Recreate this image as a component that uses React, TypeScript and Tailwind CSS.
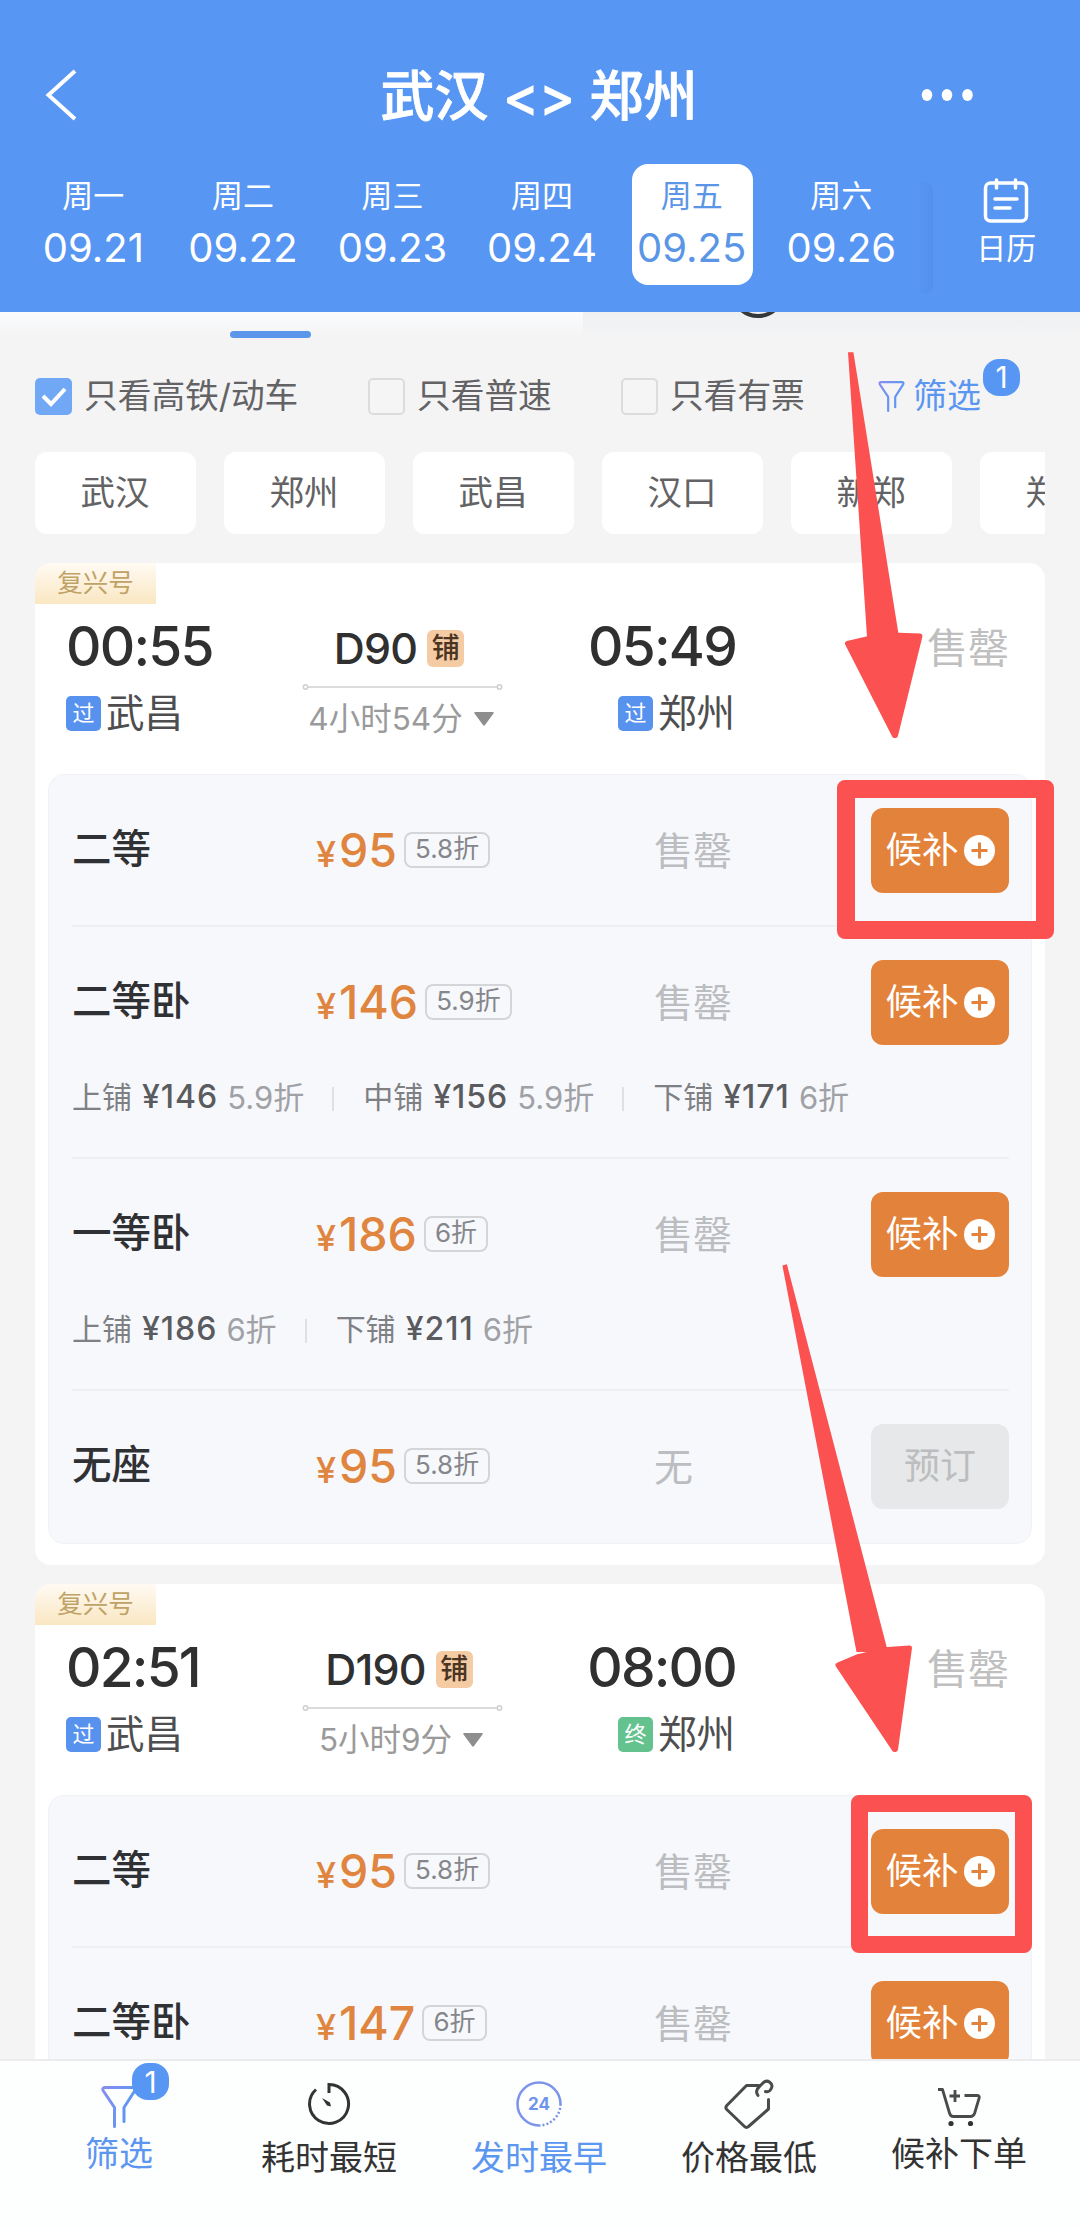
import { Fragment } from "react";
import clsx from "clsx";

type Berth = { name: string; price: number; discount: string };

type Seat = {
  name: string;
  price: number;
  discount: string;
  status: string;
  bookable: boolean;
  berths?: Berth[];
};

type Train = {
  code: string;
  depart: string;
  arrive: string;
  duration: string;
  arriveKind: "过" | "终";
  seats: Seat[];
};

const days = [
  { week: "周一", date: "09.21" },
  { week: "周二", date: "09.22" },
  { week: "周三", date: "09.23" },
  { week: "周四", date: "09.24" },
  { week: "周五", date: "09.25", active: true },
  { week: "周六", date: "09.26" },
];

const stations = ["武汉", "郑州", "武昌", "汉口", "新郑", "郑州"];

const trains: Train[] = [
  {
    code: "D90",
    depart: "00:55",
    arrive: "05:49",
    duration: "4小时54分",
    arriveKind: "过",
    seats: [
      { name: "二等", price: 95, discount: "5.8折", status: "售罄", bookable: true },
      {
        name: "二等卧",
        price: 146,
        discount: "5.9折",
        status: "售罄",
        bookable: true,
        berths: [
          { name: "上铺", price: 146, discount: "5.9折" },
          { name: "中铺", price: 156, discount: "5.9折" },
          { name: "下铺", price: 171, discount: "6折" },
        ],
      },
      {
        name: "一等卧",
        price: 186,
        discount: "6折",
        status: "售罄",
        bookable: true,
        berths: [
          { name: "上铺", price: 186, discount: "6折" },
          { name: "下铺", price: 211, discount: "6折" },
        ],
      },
      { name: "无座", price: 95, discount: "5.8折", status: "无", bookable: false },
    ],
  },
  {
    code: "D190",
    depart: "02:51",
    arrive: "08:00",
    duration: "5小时9分",
    arriveKind: "终",
    seats: [
      { name: "二等", price: 95, discount: "5.8折", status: "售罄", bookable: true },
      { name: "二等卧", price: 147, discount: "6折", status: "售罄", bookable: true },
    ],
  },
];

function Funnel({ className }: { className?: string }) {
  return (
    <svg className={className} viewBox="0 0 36 42" fill="none" stroke="url(#funnel)" strokeWidth="3" strokeLinecap="round" strokeLinejoin="round">
      <defs>
        <linearGradient id="funnel" gradientUnits="userSpaceOnUse" x1="0" y1="0" x2="36" y2="12">
          <stop offset="0" stopColor="#8a8df0" />
          <stop offset="1" stopColor="#5b98f2" />
        </linearGradient>
      </defs>
      <path d="M13.5 40.5V21.5L2.4 5C1.2 3 1.8 1.5 4 1.5h28c2.200 0 2.800 1.500 1.600 3.500L23 21.500v14" />
    </svg>
  );
}

function Header() {
  return (
    <header className="flex h-[312px] shrink-0 flex-col bg-[#5796f3] text-white">
      <div className="flex h-[164px] items-center pt-[25px] pl-[45px]">
        <svg className="h-[52px] w-8" viewBox="0 0 32 52" fill="none" stroke="currentColor" strokeWidth="4">
          <path d="M30 2 3.500 26 30 50" />
        </svg>
        <h1 className="w-[924px] pt-[4px] text-center text-[54px] leading-none font-medium [-webkit-text-stroke:0.8px_white]">
          武汉 &lt;&gt; 郑州
        </h1>
        <svg className="-ml-[81px] h-3 w-[54px]" viewBox="0 0 54 12" fill="currentColor">
          <ellipse cx="7" cy="6" rx="5.300" ry="6" />
          <ellipse cx="27" cy="6" rx="5.300" ry="6" />
          <ellipse cx="47.500" cy="6" rx="5.300" ry="6" />
        </svg>
      </div>
      <div className="flex h-[121px] items-stretch pl-[19px]">
        {days.map((day) => (
          <div key={day.date} className="flex w-[149.600px] justify-center">
            <div
              className={clsx(
                "flex w-[121px] flex-col items-center rounded-2xl pt-[17px]",
                day.active && "bg-white text-[#5b96e6]"
              )}
            >
              <span className="pr-[1px] text-[31px] leading-[30px]">{day.week}</span>
              <span className="mt-[17px] pr-[1px] text-[40px] leading-[40px]">{day.date}</span>
            </div>
          </div>
        ))}
        <div className="mt-[18px] h-[112px] w-[16px] rounded-full bg-linear-to-r from-[#5796f3] to-[#5290ec]" />
        <div className="flex flex-1 flex-col items-center pt-[14px]">
          <svg className="h-[46px] w-[46px]" viewBox="0 0 46 46" fill="none" stroke="currentColor" strokeWidth="3.500" strokeLinecap="round">
            <rect x="2.500" y="5" width="41" height="38" rx="5" />
            <path d="M13.500 2v8M32.500 2v8M12 21h22M12 30h15" />
          </svg>
          <span className="mt-[9px] text-[30px] leading-[30px]">日历</span>
        </div>
      </div>
    </header>
  );
}

function CheckItem({ label, checked }: { label: string; checked?: boolean }) {
  return (
    <label className="flex items-center gap-[12px]">
      <span
        className={clsx(
          "flex h-[37px] w-[37px] items-center justify-center rounded-[5px]",
          checked ? "bg-[#71a8f6]" : "border-2 border-[#dcdcde] bg-[#f5f5f6]"
        )}
      >
        {checked && (
          <svg className="h-[20px] w-[26px]" viewBox="0 0 26 20" fill="none" stroke="#fff" strokeWidth="4">
            <path d="M2 9l8 8L24 2" />
          </svg>
        )}
      </span>
      <span className="pb-[2px] text-[33.700px] leading-none">{label}</span>
    </label>
  );
}

function Filters() {
  return (
    <div className="shrink-0 text-[#636366]">
      <div className="relative flex h-[66px] overflow-hidden">
        <div className="h-[26px] w-[583px] bg-linear-to-b from-[#fafbfc] to-[#f4f4f5]" />
        <div className="h-[26px] flex-1 bg-linear-to-b from-[#eef0f1] to-[#f4f4f5]" />
        <span className="absolute top-[19px] left-[230px] h-[7px] w-[81px] rounded-full bg-[#5c96ea]" />
        <span className="absolute -top-[50px] left-[730px] h-[56px] w-[56px] rounded-full border-4 border-[#33393b]" />
      </div>
      <div className="flex h-[37px] items-center pl-[35px]">
        <div className="w-[333px]">
          <CheckItem label="只看高铁/动车" checked />
        </div>
        <div className="w-[253px]">
          <CheckItem label="只看普速" />
        </div>
        <div className="w-[257px]">
          <CheckItem label="只看有票" />
        </div>
        <div className="relative flex items-center text-[#5b96f0]">
          <Funnel className="h-[31px] w-[27px]" />
          <span className="ml-[8px] pb-[2px] text-[34px] leading-none">筛选</span>
          <Badge className="-top-[20px] left-[105px]" />
        </div>
      </div>
      <div className="mt-[37px] mr-[35px] ml-[35px] flex h-[82px] gap-[28px] overflow-hidden">
        {stations.map((name, i) => (
          <div key={i} className="flex w-[161px] shrink-0 items-center justify-center rounded-xl bg-white pr-[1px] text-[34.500px] leading-none">
            {name}
          </div>
        ))}
      </div>
    </div>
  );
}

function Badge({ className }: { className: string }) {
  return (
    <span className={clsx("absolute flex h-[37px] w-[37px] items-center justify-center rounded-2xl bg-[#5796f3] text-[30px] leading-none text-white", className)}>
      1
    </span>
  );
}

function Stop({ kind, name }: { kind: string; name: string }) {
  return (
    <div className="flex items-center gap-[5px]">
      <span
        className={clsx(
          "flex h-[35px] w-[35px] items-center justify-center rounded-[5px] text-[22px] leading-none text-white",
          kind === "终" ? "bg-[#63c28d]" : "bg-[#5792ee]"
        )}
      >
        {kind}
      </span>
      <span className="pr-[1px] text-[38.500px] leading-none text-[#4e4e50]">{name}</span>
    </div>
  );
}

function SeatRow({ seat }: { seat: Seat }) {
  return (
    <div className={clsx("border-b-2 border-[#eeeff2] last:border-b-0", seat.berths ? "h-[232px]" : "h-[152px]")}>
      <div className="flex h-[150px] items-center">
        <span className="w-[244px] text-[39.500px] leading-none font-medium text-[#303134]">{seat.name}</span>
        <div className="flex w-[338px] items-center">
          <div className="flex items-baseline gap-[3px] leading-none font-medium text-[#df853f]">
            <span className="text-[36px] leading-none">¥</span>
            <span className="text-[46.500px] leading-none">{seat.price}</span>
          </div>
          <span className="ml-[7px] flex h-[36px] items-center rounded-lg border-2 border-[#d4d5d8] px-[9px] pb-[3px] text-[26px] leading-none text-[#85868a]">
            {seat.discount}
          </span>
        </div>
        <span className="text-[39px] leading-none text-[#bcbdc0]">{seat.status}</span>
        {seat.bookable ? (
          <button className="ml-auto flex h-[85px] w-[138px] items-center justify-center gap-[5px] rounded-xl bg-[#e3823a] text-[36.500px] leading-none text-white">
            候补
            <svg className="h-[31px] w-[31px]" viewBox="0 0 31 31">
              <circle cx="15.500" cy="15.500" r="15.500" fill="#fff" />
              <path d="M7.500 15.500h16M15.500 7.500v16" stroke="#e3823a" strokeWidth="3" />
            </svg>
          </button>
        ) : (
          <button className="ml-auto h-[85px] w-[138px] rounded-xl bg-[#e6e8e9] text-[36px] leading-none text-[#bcbdbe]">
            预订
          </button>
        )}
      </div>
      {seat.berths && (
        <div className="flex h-[40px] items-center text-[30px] leading-none">
          {seat.berths.map((b, i) => (
            <Fragment key={b.name}>
              {i > 0 && <span className="mt-1 mr-[29px] ml-[28px] h-6 w-[2px] bg-[#dfe0e3]" />}
              <span className="text-[#7f8084]">{b.name}</span>
              <span className="ml-[10px] text-[32px] font-medium tracking-[1px] text-[#5a5b5e]">¥{b.price}</span>
              <span className="ml-[9px] text-[31px] text-[#a0a1a5]">{b.discount}</span>
            </Fragment>
          ))}
        </div>
      )}
    </div>
  );
}

function TrainCard({ train }: { train: Train }) {
  return (
    <section className="shrink-0 rounded-2xl bg-white px-[13px] pb-[21px]">
      <div className="-ml-[13px] h-[41px] w-[121px] rounded-tl-2xl bg-linear-to-b from-[#fffaf3] to-[#fae7c2] pt-[7px] text-center text-[25.500px] leading-[26px] text-[#bfa266]">
        复兴号
      </div>
      <div className="flex h-[170px] pt-[15px] pl-[18px] text-[#303030]">
        <div className="w-[236px]">
          <div className="text-[55px] leading-[55px] font-medium tracking-[-1.800px]">{train.depart}</div>
          <div className="mt-[20px]">
            <Stop kind="过" name="武昌" />
          </div>
        </div>
        <div className="flex w-[201px] flex-col items-center">
          <div className="mt-[5px] flex h-[48px] items-center gap-[10px] pr-[7px]">
            <span className="text-[43px] leading-none font-medium tracking-[-0.800px]">{train.code}</span>
            <span className="flex h-[37px] w-[37px] items-center justify-center rounded-md bg-[#f5cba4] text-[28px] leading-none font-medium text-[#4a3523]">
              铺
            </span>
          </div>
          <svg className="mt-[11px] h-[8px] w-[201px]" viewBox="0 0 201 8" fill="none" stroke="#cfcfcf" strokeWidth="1.500">
            <circle cx="3.500" cy="4" r="2.200" />
            <circle cx="197.500" cy="4" r="2.200" />
            <path d="M6 4h189" />
          </svg>
          <div className="mt-[12px] flex items-center gap-[11px] pr-[3px] text-[31.500px] leading-none text-[#9a9a9a]">
            {train.duration}
            <svg className="h-[14px] w-[20px]" viewBox="0 0 20 14" fill="#8e8e8e">
              <path d="M1.500 0h17q2 0 1 1.500L11 13q-1 1.300-2 0L.5 1.500Q-.5 0 1.500 0z" />
            </svg>
          </div>
        </div>
        <div className="flex w-[233px] flex-col items-end">
          <div className="text-[55px] leading-[55px] font-medium tracking-[-1.800px]">{train.arrive}</div>
          <div className="mt-[20px]">
            <Stop kind={train.arriveKind} name="郑州" />
          </div>
        </div>
        <span className="mt-[9px] ml-auto pr-[23px] text-[41px] leading-none text-[#bfbfbf]">售罄</span>
      </div>
      <div className="rounded-2xl border border-[#f1f2f5] bg-[#f7f8fc] pr-[22px] pl-[23px]">
        {train.seats.map((seat) => (
          <SeatRow key={seat.name} seat={seat} />
        ))}
      </div>
    </section>
  );
}

function TabBar() {
  return (
    <nav className="flex h-[169px] shrink-0 border-t-2 border-[#ececee] bg-[#fdfefe] px-[14px] text-[34px] leading-none text-[#333]">
      <div className="relative flex w-[210px] flex-col items-center pt-[25px] text-[#5b96f0]">
        <Funnel className="h-[42px] w-[36px]" />
        <Badge className="top-[2px] left-[118px]" />
        <span className="mt-[9px]">筛选</span>
      </div>
      <div className="flex w-[210px] flex-col items-center pt-[21px]">
        <svg className="h-[44px] w-[44px]" viewBox="0 0 44 44" fill="none" stroke="currentColor" strokeWidth="3">
          <path d="M22 11V2.500a19.500 19.500 0 1 1-13 5" />
          <path d="M15 16l8 4.500 1 4-4-1z" fill="currentColor" stroke="none" />
        </svg>
        <span className="mt-[15px]">耗时最短</span>
      </div>
      <div className="flex w-[210px] flex-col items-center pt-[20px] text-[#5b96f0]">
        <svg className="h-[46px] w-[46px]" viewBox="0 0 46 46" fill="none" stroke="#7c94ea" strokeWidth="2.500">
          <path d="M23 44.500A21.500 21.500 0 1 1 44.500 23" />
          <path d="M44.500 23A21.500 21.500 0 0 1 23 44.500" strokeDasharray="2 2" />
          <text x="23" y="29" textAnchor="middle" fontSize="17" fontWeight="700" fill="#6f92ec" stroke="none">
            24
          </text>
        </svg>
        <span className="mt-[14px]">发时最早</span>
      </div>
      <div className="flex w-[210px] flex-col items-center pt-[18px]">
        <svg className="h-[50px] w-[50px]" viewBox="0 0 50 50" fill="none" stroke="#4a4a4a" strokeWidth="3" strokeLinecap="round" strokeLinejoin="round">
          <path d="M35 6.500H22.500L2.800 26.500q-1.800 2 0 4L20.500 47.500q2 2 4 0L44.500 30V20.500" />
          <path d="M34 16.500c-2.500-3.500-1.500-6.500 1.500-9l4-4c4-3.500 10 1 8 5.500-1 2.500-3.500 4.500-6 3.500" />
        </svg>
        <span className="mt-[12px]">价格最低</span>
      </div>
      <div className="flex w-[210px] flex-col items-center pt-[26px]">
        <svg className="h-[40px] w-[44px]" viewBox="0 0 44 40" fill="none" stroke="#4a4a4a" strokeWidth="2.800" strokeLinejoin="round">
          <path d="M1 2.500h4.500L12.500 26q1 3.500 4 3.500h17q3 0 4.200-3.500L42 11.500q1-3-2-3H27.500" />
          <path d="M18 3v12M12.500 9h10.500" />
          <circle cx="14" cy="36.500" r="2.600" fill="#333" stroke="none" />
          <circle cx="33.500" cy="36.500" r="2.600" fill="#333" stroke="none" />
        </svg>
        <span className="mt-[10px]">候补下单</span>
      </div>
    </nav>
  );
}

// red guide arrows and frames drawn on top of the list
function Guides() {
  return (
    <>
      <svg className="pointer-events-none absolute inset-0 h-[2228px] w-[1080px]" viewBox="0 0 1080 2228" fill="#fb5151" stroke="#fb5151" strokeWidth="5" strokeLinejoin="round">
        <path d="M848 352.300h5.400L899 637H867zM782.400 1265.500l4.500-1.200L888 1652H856.500z" stroke="none" />
        <path d="M847.500 643.500 868 638.800 898.500 635.200 920 636 895.500 735.500H894.500zM838 1665 857 1657 888 1649.500 909.500 1648 895.500 1749.500H894.500z" />
      </svg>
      <span className="absolute top-[780px] left-[837px] h-[159px] w-[217px] rounded-lg border-[18px] border-[#fb5151]" />
      <span className="absolute top-[1795px] left-[851px] h-[158px] w-[181px] rounded-lg border-[17px] border-[#fb5151]" />
    </>
  );
}

export default function App() {
  return (
    <div className="relative flex h-[2228px] w-[1080px] flex-col overflow-hidden bg-[#f4f4f5] font-['Inter','Noto_Sans_CJK_SC',sans-serif]">
      <Header />
      <main className="flex min-h-0 flex-1 flex-col overflow-hidden">
        <Filters />
        <div className="mt-[29px] flex flex-col gap-[19px] px-[35px]">
          {trains.map((train) => (
            <TrainCard key={train.code} train={train} />
          ))}
        </div>
      </main>
      <TabBar />
      <Guides />
    </div>
  );
}
